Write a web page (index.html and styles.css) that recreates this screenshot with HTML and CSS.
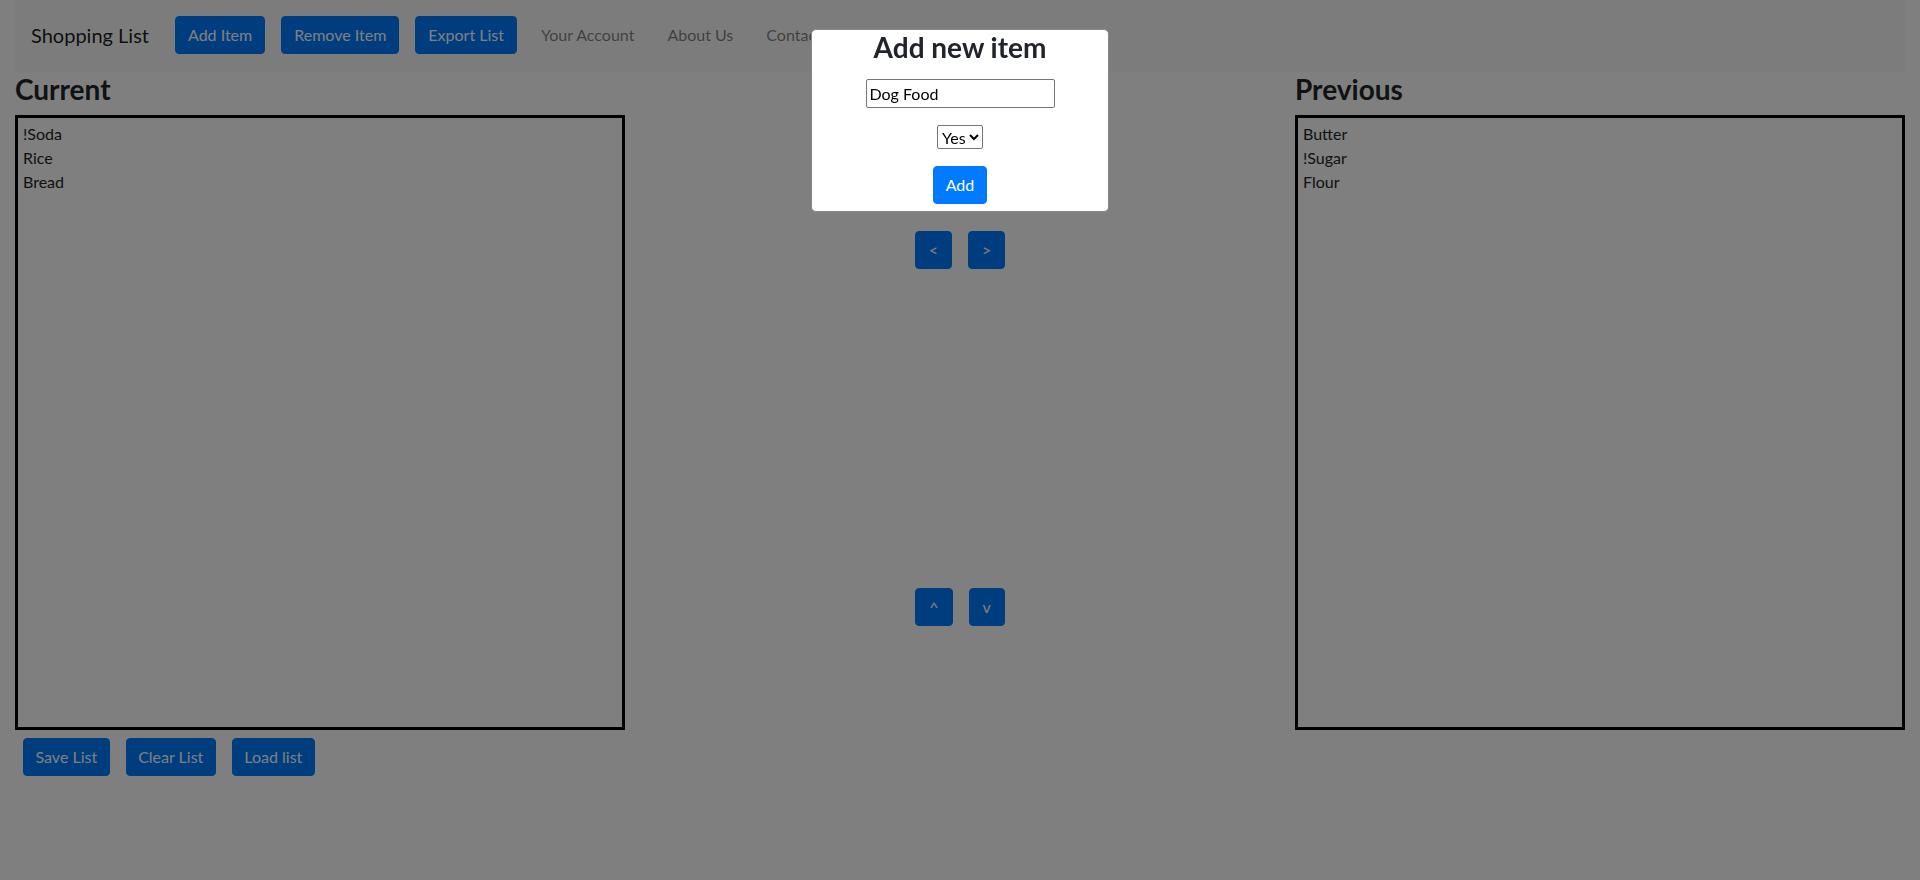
FILE: index.html
```html
<!DOCTYPE html>
<html lang="en">
<head>
<meta charset="utf-8">
<title>Shopping List</title>
<link rel="stylesheet" href="styles.css">
</head>
<body>
<nav class="navbar">
  <span class="brand">Shopping List</span>
  <button class="btn">Add Item</button>
  <button class="btn">Remove Item</button>
  <button class="btn">Export List</button>
  <a class="nav-link" href="#">Your Account</a>
  <a class="nav-link" href="#">About Us</a>
  <a class="nav-link" href="#">Contact</a>
</nav>

<main class="main">
  <section class="col">
    <h3 class="title">Current</h3>
    <div class="list">
      <div class="item">!Soda</div>
      <div class="item">Rice</div>
      <div class="item">Bread</div>
    </div>
    <div class="actions">
      <button class="btn">Save List</button>
      <button class="btn">Clear List</button>
      <button class="btn">Load list</button>
    </div>
  </section>

  <section class="middle">
    <div class="move-row move-lr">
      <button class="btn btn-arrow">&lt;</button>
      <button class="btn btn-arrow">&gt;</button>
    </div>
    <div class="move-row move-ud">
      <button class="btn btn-arrow">^</button>
      <button class="btn btn-arrow">v</button>
    </div>
  </section>

  <section class="col">
    <h3 class="title">Previous</h3>
    <div class="list">
      <div class="item">Butter</div>
      <div class="item">!Sugar</div>
      <div class="item">Flour</div>
    </div>
  </section>
</main>

<div class="backdrop"></div>
<div class="modal">
  <h3 class="modal-title">Add new item</h3>
  <input class="modal-input" type="text" value="Dog Food">
  <select class="modal-select">
    <option>Yes</option>
    <option>No</option>
  </select>
  <button class="btn btn-add">Add</button>
</div>
</body>
</html>
```

FILE: styles.css
```css
* { box-sizing: border-box; }

body {
  margin: 0;
  font-family: "Lato", "Liberation Sans", sans-serif;
  font-size: 16px;
  line-height: 1.5;
  color: #212529;
  background: #fff;
}

.navbar {
  margin: 0 15px;
  background: #f8f9fa;
  display: flex;
  align-items: center;
  padding: 16px 16px 18px;
  height: 72px;
}

.brand {
  width: 144px;
  font-size: 20px;
  line-height: 30px;
  color: rgba(0, 0, 0, 0.9);
}

.btn {
  font-family: inherit;
  font-size: 16px;
  line-height: 24px;
  padding: 6px 12px;
  border: 1px solid #007bff;
  border-radius: 4px;
  background: #007bff;
  color: #fff;
  cursor: pointer;
}

.navbar .btn { margin-right: 16px; }

.nav-link {
  color: rgba(0, 0, 0, 0.5);
  text-decoration: none;
  padding: 8px;
  margin-right: 17px;
}

.main {
  margin: 0 15px;
  display: grid;
  grid-template-columns: 610px 1fr 610px;
}

.title {
  margin: 0 0 9px;
  font-size: 28px;
  line-height: 34px;
  font-weight: 700;
}

.list {
  height: 615px;
  border: 3px solid #000;
  padding: 4px 5px;
}

.item { line-height: 24px; }

.actions {
  margin-top: 8px;
  display: flex;
}
.actions .btn { margin: 0 8px; padding: 6px 11.5px; }

.middle {
  display: flex;
  flex-direction: column;
  align-items: center;
}

.move-row {
  display: flex;
  gap: 16px;
}
.move-lr { margin-top: 159px; }
.move-ud { margin-top: 319px; }

.btn-arrow { padding: 6px 13px; }

.backdrop {
  position: fixed;
  inset: 0;
  background: rgba(0, 0, 0, 0.5);
}

.modal {
  position: fixed;
  top: 29px;
  left: 50%;
  transform: translateX(-50%);
  width: 298px;
  background: #fff;
  border: 1px solid #888;
  border-radius: 5px;
  padding: 0 0 7px;
  display: flex;
  flex-direction: column;
  align-items: center;
}

.modal-title {
  margin: 0;
  font-size: 28px;
  line-height: 34px;
  font-weight: 700;
}

.modal-input {
  margin-top: 15px;
  width: 189px;
  height: 29px;
  border: 1px solid #767676;
  border-radius: 2px;
  padding: 1px 3px;
  font-family: inherit;
  font-size: 16px;
  color: #000;
}

.modal-select {
  margin-top: 17px;
  height: 24px;
  border: 1px solid #767676;
  border-radius: 2px;
  font-family: inherit;
  font-size: 16px;
  color: #000;
  background: #fff;
}

.btn-add { margin-top: 17px; }
```
